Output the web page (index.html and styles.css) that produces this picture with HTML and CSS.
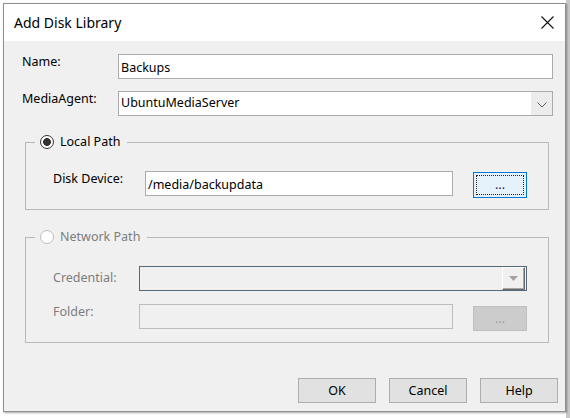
FILE: index.html
```html
<!DOCTYPE html>
<html>
<head>
<meta charset="utf-8">
<title>Add Disk Library</title>
<link rel="stylesheet" href="styles.css">
</head>
<body>
<div class="dialog">
  <div class="titlebar">
    <span class="title">Add Disk Library</span>
    <svg class="close" width="13" height="13" viewBox="0 0 13 13"><path d="M0.5 0.5 L12.5 12.5 M12.5 0.5 L0.5 12.5" stroke="#111" stroke-width="1.1" fill="none"/></svg>
  </div>
  <div class="content">
    <div class="row">
      <span class="lbl">Name:</span>
      <div class="field">Backups</div>
    </div>
    <div class="row">
      <span class="lbl">MediaAgent:</span>
      <div class="field combo">
        <span class="combo-text">UbuntuMediaServer</span>
        <span class="combo-arrow"><svg width="10" height="6" viewBox="0 0 10 6"><polyline points="0.5,0.5 5,5 9.5,0.5" fill="none" stroke="#5a5a5a" stroke-width="1"/></svg></span>
      </div>
    </div>

    <fieldset class="group local">
      <legend class="legend"><span class="radio checked"></span><span>Local Path</span></legend>
      <div class="gbody">
        <div class="grow">
          <span class="glbl">Disk Device:</span>
          <div class="field path">/media/backupdata</div>
          <button class="browse focused"><span class="focus-ring">...</span></button>
        </div>
      </div>
    </fieldset>

    <fieldset class="group network">
      <legend class="legend off"><span class="radio"></span><span>Network Path</span></legend>
      <div class="gbody">
        <div class="grow">
          <span class="glbl cred">Credential:</span>
          <div class="dcombo"><span class="dcombo-btn"><svg width="9" height="5" viewBox="0 0 9 5"><polygon points="0,0 9,0 4.5,5" fill="#a3a3a3"/></svg></span></div>
        </div>
        <div class="grow">
          <span class="glbl">Folder:</span>
          <div class="dfield"></div>
          <button class="browse disabled" disabled>...</button>
        </div>
      </div>
    </fieldset>

    <div class="footer">
      <button class="btn">OK</button>
      <button class="btn">Cancel</button>
      <button class="btn">Help</button>
    </div>
  </div>
</div>
</body>
</html>
```

FILE: styles.css
```css
* { box-sizing: border-box; }
html, body { margin: 0; padding: 0; }
body {
  width: 570px;
  height: 418px;
  overflow: hidden;
  background: linear-gradient(to right, #fff 0 566px, #c8c8c8 566px);
  font-family: "Noto Sans", "Open Sans", sans-serif;
  font-size: 12.5px;
  color: #000;
}
.dialog {
  margin: 3px 0 0 3px;
  width: 563px;
  height: 409px;
  border: 1px solid #8f8f8f;
  box-shadow: 1px 1px 2px rgba(0, 0, 0, 0.35);
  background: #f0f0f0;
  display: flex;
  flex-direction: column;
}
.titlebar {
  flex: none;
  height: 37px;
  background: #fff;
  display: flex;
  align-items: center;
  justify-content: space-between;
  padding: 0 11px 0 10px;
}
.title { font-size: 14px; line-height: 18px; }
.close { display: block; }
.content {
  flex: 1;
  padding: 13px 7px 0 18px;
}
.row {
  display: flex;
  align-items: flex-start;
  margin-right: 5px;
}
.row + .row { margin-top: 12px; }
.lbl { width: 96px; flex: none; line-height: 16px; }
.field {
  flex: 1;
  height: 25px;
  border: 1px solid #ababab;
  background: #fff;
  padding: 4px 0 0 2px;
  line-height: 17px;
  white-space: nowrap;
}
.combo { display: flex; padding: 0; }
.combo-text { flex: 1; padding: 2px 0 0 2px; line-height: 17px; }
.combo-arrow {
  width: 21px;
  background: #ececec;
  display: flex;
  align-items: center;
  justify-content: center;
}
.combo-arrow svg { display: block; margin-top: 2px; }

.group {
  margin: 18px 9px 0 3px;
  padding: 0;
  border: 1px solid #b9b9b9;
  min-width: 0;
}
.network { margin-top: 19px; }
.legend {
  margin-left: 9px;
  padding: 0 7px 0 5px;
  height: 16px;
  line-height: 16px;
  display: flex;
  align-items: center;
  gap: 6px;
}
.legend.off { color: #7d7d7d; }
.radio {
  width: 14px;
  height: 14px;
  border-radius: 50%;
  border: 1px solid #bdbdbd;
  background: #fff;
  flex: none;
}
.radio.checked {
  border-color: #333;
  background: radial-gradient(circle, #333 0 3.6px, #fff 4.2px);
}
.gbody { padding: 21px 21px 11px 27px; }
.grow { display: flex; align-items: flex-start; }
.grow + .grow { margin-top: 13px; }
.glbl { flex: none; line-height: 16px; }
.local .glbl { width: 92px; }
.network .glbl { width: 86px; color: #7d7d7d; }
.network .glbl.cred { margin-top: 4px; }
.path { flex: 1; }

.browse {
  flex: none;
  width: 54px;
  height: 26px;
  margin: 1px 0 0 20px;
  font-family: inherit;
  font-size: 12.5px;
  line-height: 14px;
  padding: 0;
}
.browse.focused {
  border: 1px solid #0078d7;
  background: #e5f1fb;
  padding: 2px;
  color: #1a1a55;
}
.focus-ring {
  display: flex;
  align-items: center;
  justify-content: center;
  height: 100%;
  border: 1px dotted #222;
}
.browse.disabled {
  height: 25px;
  margin-top: 2px;
  border: 1px solid #bfbfbf;
  background: #cccccc;
  color: #9c9c9c;
}
.dcombo {
  flex: 1;
  height: 25px;
  border: 1px solid #55687b;
  background: #f0f0f0;
  display: flex;
  justify-content: flex-end;
  padding: 0 1px 0 0;
}
.dcombo-btn {
  width: 23px;
  height: 23px;
  background: #f0f0f0;
  border-top: 1px solid #fff;
  border-left: 1px solid #fff;
  border-right: 1px solid #6b6b6b;
  border-bottom: 1px solid #6b6b6b;
  box-shadow: inset -1px -1px 0 #a5a5a5;
  display: flex;
  align-items: center;
  justify-content: center;
}
.dcombo-btn svg { display: block; }
.dfield {
  flex: 1;
  height: 25px;
  border: 1px solid #bcbcbc;
  background: #f0f0f0;
}

.footer {
  display: flex;
  justify-content: flex-end;
  gap: 13px;
  margin-top: 35px;
}
.btn {
  width: 78px;
  height: 25px;
  border: 1px solid #adadad;
  background: #e1e1e1;
  font-family: inherit;
  font-size: 12.5px;
  color: #000;
  padding: 0;
}
```
